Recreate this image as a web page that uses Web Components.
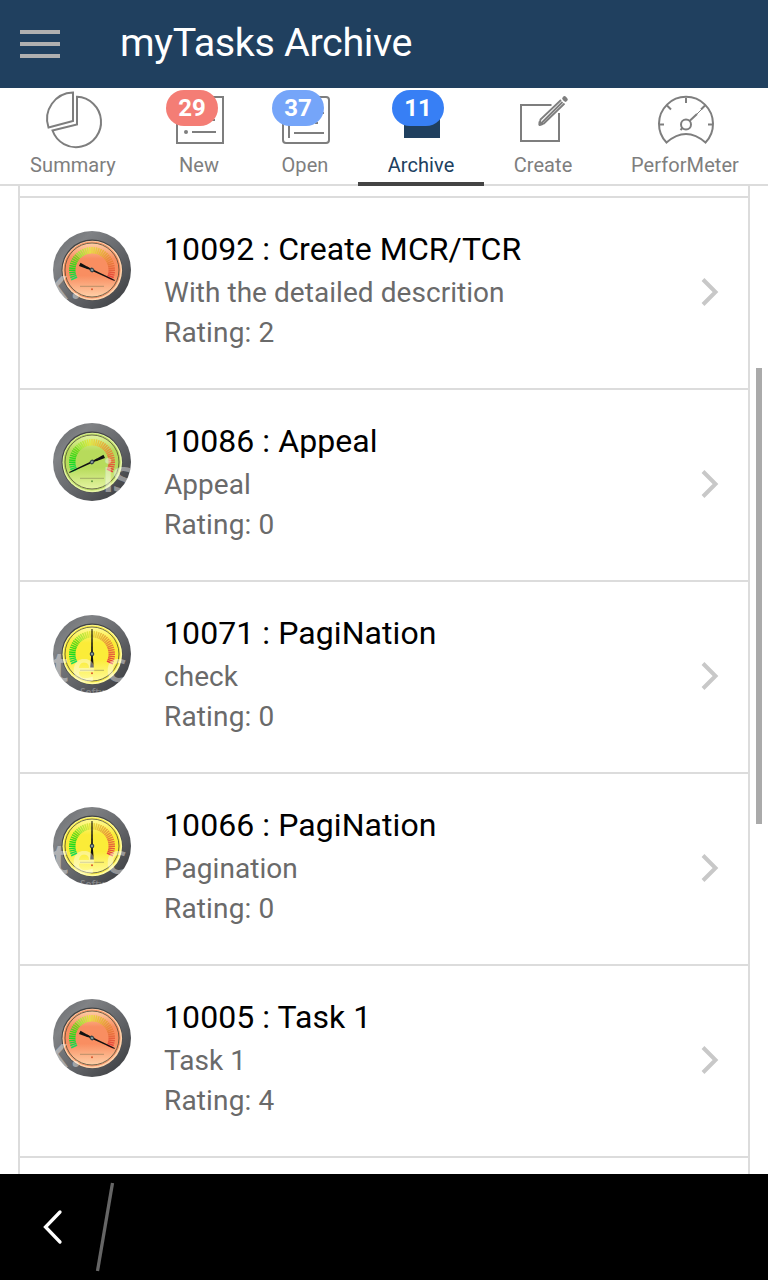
<!DOCTYPE html>
<html lang="en">
<head>
<meta charset="utf-8">
<title>myTasks Archive</title>
<style>
html,body{margin:0;height:100%;background:#fff;overflow:hidden}
body{font-family:Roboto,sans-serif}
</style>
</head>
<body>
<tasks-app></tasks-app>
<script>
const define = (name, html) => customElements.define(name, class extends HTMLElement {
  connectedCallback() {
    if (this.shadowRoot) return;
    const t = document.createElement('template');
    t.innerHTML = typeof html === 'function' ? html(this) : html;
    this.attachShadow({mode: 'open'}).append(t.content.cloneNode(true));
  }
});

define('app-header', `
<style>
:host{display:flex;align-items:center;height:88px;background:#20405f;color:#fff;box-sizing:border-box;padding-left:20px;gap:60px}
svg{display:block}
h1{margin:0;font-weight:400;font-size:39.500px;line-height:86px;height:88px;letter-spacing:-.35px;white-space:nowrap}
</style>
<svg width="40" height="28" fill="#b0b0b0"><path d="M0 0H40V4H0zM0 12H40V16H0zM0 24H40V28H0z"/></svg>
<h1><slot></slot></h1>`);

const icons = {
  summary: `<path d="M30 4.500A26.500 26.500 0 0 0 5.500 39.500L30 33z"/><path d="M34 8.800A25 25.200 0 1 1 9.500 42.500L34 36.500z" />`,
  news: `<path d="M8 9H54V55H8zM22 20H46M22 32H46M23 44H47"/><g fill="currentColor" stroke="none"><circle cx="17" cy="20" r="2"/><circle cx="17" cy="32" r="2"/><circle cx="17" cy="44" r="2"/></g>`,
  open: `<rect x="8" y="9" width="46" height="46" rx="3"/><path d="M14 18V50M19 45H49M40 35H43M46 25H49"/>`,
  archive: `<path d="M14 28H50V50H14z" fill="currentColor" stroke="none"/>`,
  create: `<path d="M39.500 17H9V53H47V25"/><path d="M27.500 37L28.500 31.500L49 12M52.500 15.500L32 35.500L27.500 37L50.500 14" stroke-width="1.800"/><path d="M52.500 10.500L53.500 11.500" stroke-width="4.500" stroke-linecap="round"/><path d="M27 37.500V33.500L31 36.500z" fill="currentColor" stroke-width="1"/>`,
  meter: `<path d="M12.500 54.500A27 27 0 1 1 51.500 54.500Q32 37.500 12.500 54.500z"/><path d="M32 10V15M13 17.500L17 21.500M51 17.500L47 21.500M5 36.500H10M59 36.500H54"/><circle cx="32" cy="36.500" r="5"/><path d="M26.500 42L29 39.500M35.500 33L43 26"/><path d="M41 28L48 21" stroke-width="1"/>`
};

define('tab-item', el => `
<style>
:host{display:flex;flex-direction:column;align-items:center;position:relative;box-sizing:border-box;height:98px;color:#7e7e7e;border-bottom:2px solid #dcdcdc}
:host([active]){color:#20405f;border-bottom:4px solid #444}
svg{display:block;fill:none;stroke:currentColor;stroke-width:2}
span{font-size:20px;line-height:30px;letter-spacing:.07px;white-space:nowrap}
b{position:absolute;top:2px;left:calc(50% - 33px + var(--shift,0px));width:52px;height:36px;border-radius:18px;background:var(--badge);color:#fff;font-size:24px;line-height:36px;text-align:center}
</style>
<svg viewBox="0 0 62 62" width="62" height="62" overflow="visible"><g transform="translate(${el.getAttribute('dx') || 0} 0)">${icons[el.getAttribute('icon')]}</g></svg>
<span><slot></slot></span>
${el.hasAttribute('count') ? `<b>${el.getAttribute('count')}</b>` : ''}`);

define('tab-bar', `
<style>:host{display:grid;grid-template-columns:146px 106px 106px 126px 118px 166px;height:98px;background:#fff}</style>
<slot></slot>`);

const kinds = {
  red:    {face:'#f98e61', pale:'#ffd2aa', needle:115, mark:'<text x="-8 18" y="69" font-size="42">k.</text>'},
  green:  {face:'#b7db5b', pale:'#e6f5a4', needle:245, mark:'<text x="50 60" y="70" font-size="45">is</text>'},
  yellow: {face:'#fbec38', pale:'#fffb9d', needle:0, mark:'<text x="0 20 54" y="68" font-size="42">tec</text><text x="28" y="82" font-size="10" fill-opacity=".3">Softw</text>'}
};
const gaugeSvg = kind => {
  const k = kinds[kind];
  let ticks = '';
  for (let i = 0; i <= 38; i++) {
    const f = i / 38, hue = f < .5 ? 140 - 166 * f : 56 - (f - .5) * 110;
    ticks += `<path d="M40 17V23.500" stroke="hsl(${hue} 78% ${f<.3?48:57}%)" stroke-width="1.500" transform="rotate(${-115 + f*230} 40 40)"/>`;
  }
  return `<svg viewBox="0 0 80 80" width="80" height="80">
  <defs>
   <linearGradient id="rim" x1="0" y1="0" x2="1" y2="1"><stop offset="0" stop-color="#67696c"/><stop offset=".25" stop-color="#808285"/><stop offset=".6" stop-color="#606266"/><stop offset="1" stop-color="#35373a"/></linearGradient>
   <linearGradient id="face" x1="0" y1="0" x2="0" y2="1"><stop offset="0" stop-color="${k.pale}"/><stop offset=".3" stop-color="${k.face}"/><stop offset=".6" stop-color="${k.face}"/><stop offset="1" stop-color="${k.pale}"/></linearGradient>
   <clipPath id="disc"><circle cx="40" cy="40" r="39"/></clipPath>
  </defs>
  <circle cx="40" cy="40" r="39" fill="url(#rim)"/>
  <circle cx="40" cy="40" r="30.500" fill="#414345"/>
  <circle cx="40.300" cy="40.500" r="29.800" fill="${k.pale}"/>
  <circle cx="40" cy="40" r="28" fill="url(#face)" stroke="${k.face}" stroke-width="1"/>
  <circle cx="40" cy="40" r="27" fill="none" stroke="#4c4a35" stroke-width=".8"/>
  ${ticks}
  <path d="M28 56.300H52" stroke="#75704e" stroke-width=".5"/><circle cx="40" cy="59.300" r="1" fill="${kind === 'green' ? '#659b42' : '#dc5830'}"/>
  <g transform="rotate(${k.needle} 40 40)"><path d="M39.500 15H40.500L41 46H39z" fill="#111"/><path d="M39 44H41L41.800 53.500H38.200z" fill="#111"/><circle cx="40" cy="40" r="2.300" fill="#38474c"/><circle cx="40" cy="40" r=".9" fill="#a9bbb9"/></g>
  <g clip-path="url(#disc)" fill="#fff" fill-opacity=".43" font-family="Open Sans, sans-serif" font-weight="600">${k.mark}</g>
  </svg>`;
};
define('rating-gauge', el => `
<style>:host{display:block;width:80px;height:80px}:host([kind="yellow"]) svg{margin-left:-.5px}svg{display:block}</style>${gaugeSvg(el.getAttribute('kind'))}`);

define('task-row', el => `
<style>
:host{display:grid;grid-template-columns:80px 1fr 18px;column-gap:32px;box-sizing:border-box;height:192px;padding:0 29px 0 32px;border-top:2px solid #dcdcdc;background:#fff}
rating-gauge{margin-top:32px}
.text{padding-top:30px;white-space:nowrap}
h2{margin:0 0 3px;font-weight:400;font-size:32px;line-height:42px;color:#000;letter-spacing:.08px}
p{margin:0;font-size:28px;line-height:40px;color:#6a6a6a;letter-spacing:.05px}
p+p{letter-spacing:.15px}
.go{display:block;margin-top:79px}
</style>
<rating-gauge kind="${el.getAttribute('kind')}"></rating-gauge>
<div class="text"><h2><slot name="title"></slot></h2><p><slot name="detail"></slot></p><p><slot name="rating"></slot></p></div>
<svg class="go" width="18" height="30" fill="none" stroke="#c8c8c8" stroke-width="4"><path d="M2 2.500L14.500 15L2 27.500"/></svg>`);

define('task-list', `
<style>
:host{display:flex;height:988px;overflow:hidden;box-sizing:border-box;padding:0 6px 0 18px}
.items{width:728px;border:solid #dcdcdc;border-width:0 2px;padding-top:10px}
.end{border-top:2px solid #dcdcdc}
.bar{margin:182px 0 0 6px;width:6px;height:456px;background:#aaa}
</style>
<div class="items"><slot></slot><div class="end"></div></div><div class="bar"></div>`);

define('system-bar', `
<style>:host{display:block;height:106px;background:#000}svg{display:block}</style>
<svg width="140" height="106" fill="none"><path d="M60 38L45.500 53L60 68" stroke="#fff" stroke-width="3.300" stroke-linecap="round"/><path d="M112.500 9L97.500 97" stroke="#666" stroke-width="3.300"/></svg>`);

const tasks = [
  ['red','10092 : Create MCR/TCR','With the detailed descrition','Rating: 2'],
  ['green','10086 : Appeal','Appeal','Rating: 0'],
  ['yellow','10071 : PagiNation','check','Rating: 0'],
  ['yellow','10066 : PagiNation','Pagination','Rating: 0'],
  ['red','10005 : Task 1','Task 1','Rating: 4']
];
define('tasks-app', () => `
<style>
:host{display:flex;flex-direction:column;width:768px;height:1280px;overflow:hidden;font-family:Roboto,sans-serif}
</style>
<app-header>myTasks Archive</app-header>
<tab-bar>
 <tab-item icon="summary" dx="1">Summary</tab-item>
 <tab-item icon="news" dx="1" count="29" style="--badge:#f47d75">New</tab-item>
 <tab-item icon="open" dx="1" count="37" style="--badge:#75a5f9">Open</tab-item>
 <tab-item icon="archive" count="11" active style="--badge:#377ff5;--shift:4px">Archive</tab-item>
 <tab-item icon="create">Create</tab-item>
 <tab-item icon="meter">PerforMeter</tab-item>
</tab-bar>
<task-list>${tasks.map(t => `<task-row kind="${t[0]}"><span slot="title">${t[1]}</span><span slot="detail">${t[2]}</span><span slot="rating">${t[3]}</span></task-row>`).join('')}</task-list>
<system-bar></system-bar>`);
</script>
</body>
</html>
